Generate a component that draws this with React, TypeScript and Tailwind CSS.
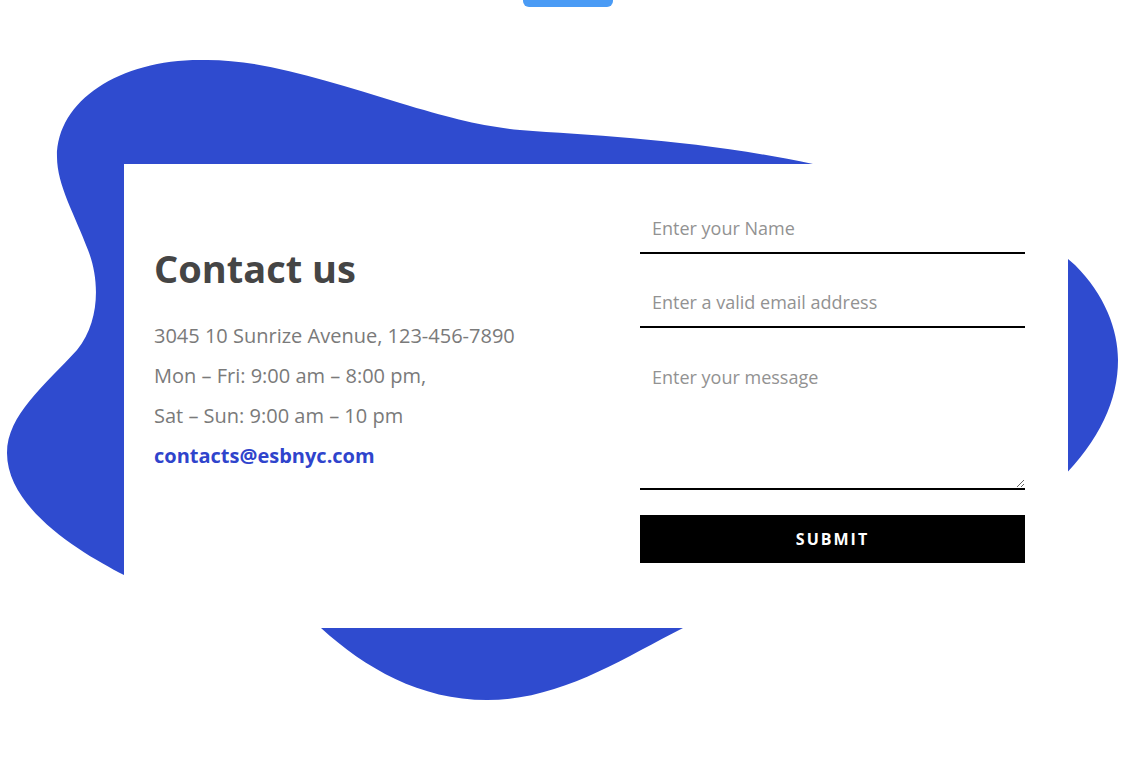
const Blob = () => (
  <svg
    className="absolute left-0 top-0"
    width="1134"
    height="767"
    viewBox="0 0 1134 767"
    aria-hidden="true"
  >
    <path
      fill="#2f4bcf"
      d="M 200 60
         C 260 58, 330 82, 400 103
         C 450 118, 480 126, 520 130
         C 600 136, 700 140, 813 164
         C 930 185, 1020 215, 1075 265
         C 1105 295, 1118 330, 1118 360
         C 1118 400, 1100 440, 1060 480
         C 950 560, 800 570, 683 628
         C 620 660, 560 700, 487 700
         C 420 700, 365 668, 321 628
         C 290 600, 200 600, 124 575
         C 85 555, 7 510, 7 453
         C 7 415, 45 385, 77 350
         C 100 322, 100 280, 88 250
         C 75 215, 57 185, 57 157
         C 57 100, 120 60, 200 60 Z"
    />
  </svg>
)

const ContactForm = () => {
  return (
    <form className="flex w-[385px] flex-col pt-[40px]" onSubmit={(e) => e.preventDefault()}>
      <input
        type="text"
        placeholder="Enter your Name"
        className="h-[50px] border-b-2 border-black px-3 text-[18px] outline-none placeholder:text-[#929292]"
      />
      <input
        type="email"
        placeholder="Enter a valid email address"
        className="mt-[24px] h-[50px] border-b-2 border-black px-3 text-[18px] outline-none placeholder:text-[#929292]"
      />
      <textarea
        placeholder="Enter your message"
        className="mt-[24px] h-[138px] border-b-2 border-black px-3 pt-[12px] text-[18px] outline-none placeholder:text-[#929292]"
      />
      <button
        type="submit"
        className="mt-[25px] h-[48px] bg-black text-[16px] font-bold tracking-[2px] text-white"
      >
        SUBMIT
      </button>
    </form>
  )
}

export default function App() {
  return (
    <div className="relative h-[767px] w-full overflow-hidden bg-white font-['Open_Sans',sans-serif]">
      <Blob />
      <div className="relative flex justify-center">
        <div className="ml-[2px] h-[7px] w-[90px] rounded-b-[6px] bg-[#4a9bf5]" />
      </div>
      <div className="relative ml-[124px] mt-[157px] flex h-[464px] w-[944px] bg-white">
        <div className="flex w-[516px] flex-col pl-[30px] pt-[80px]">
          <h2 className="text-[38px] font-bold leading-[48px] text-[#454545]">Contact us</h2>
          <div className="mt-[24px] flex flex-col text-[20px] leading-[40px] text-[#7a7a7a]">
            <p>3045 10 Sunrize Avenue, 123-456-7890</p>
            <p>Mon – Fri: 9:00 am – 8:00 pm,</p>
            <p>Sat – Sun: 9:00 am – 10 pm</p>
            <a href="#" className="font-bold text-[#2f44cc]">
              contacts@esbnyc.com
            </a>
          </div>
        </div>
        <ContactForm />
      </div>
    </div>
  )
}
